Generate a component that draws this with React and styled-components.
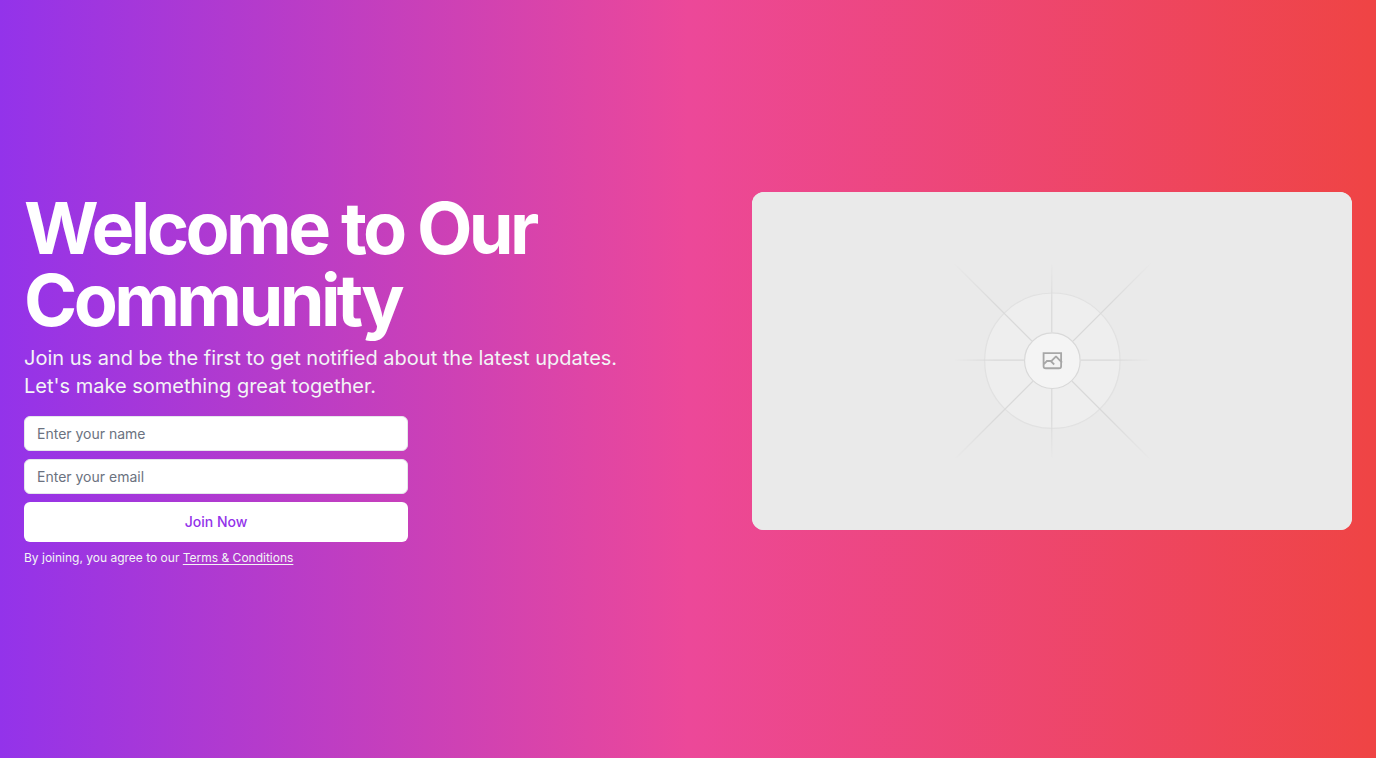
import React from "react";
import styled, { createGlobalStyle } from "styled-components";

const GlobalStyle = createGlobalStyle`
  *, *::before, *::after {
    box-sizing: border-box;
  }
  body {
    margin: 0;
    font-family: Inter, "Liberation Sans", sans-serif;
    font-size: 16px;
    line-height: 24px;
  }
`;

const Hero = styled.main`
  display: flex;
  align-items: center;
  min-height: 100vh;
  padding: 24px;
  color: #ffffff;
  background: linear-gradient(to right, #9333ea, #ec4899, #ef4444);
`;

const Columns = styled.div`
  display: grid;
  flex: 1;
  gap: 48px;
  grid-template-columns: minmax(0, 1fr) minmax(0, 600px);

  @media (max-width: 1023px) {
    grid-template-columns: minmax(0, 1fr);
  }
`;

const Content = styled.section`
  display: flex;
  flex-direction: column;
  gap: 16px;
`;

const Intro = styled.div`
  display: flex;
  flex-direction: column;
  gap: 8px;
`;

const Title = styled.h1`
  margin: 0;
  font-size: 72px;
  font-weight: 700;
  line-height: 72px;
  letter-spacing: -0.05em;
`;

const Lead = styled.p`
  margin: 0;
  max-width: 600px;
  color: #f3f4f6;
  font-size: 20px;
  line-height: 28px;
`;

const SignUp = styled.div`
  display: flex;
  flex-direction: column;
  gap: 8px;
  width: 100%;
  max-width: 384px;
`;

const Form = styled.form`
  display: flex;
  flex-direction: column;
  gap: 8px;
`;

const Field = styled.input`
  width: 100%;
  padding: 8px 12px;
  border: 1px solid #e5e7eb;
  border-radius: 6px;
  background: #ffffff;
  color: #111827;
  font-family: inherit;
  font-size: 14px;

  &::placeholder {
    color: #6b7280;
    opacity: 1;
  }
`;

const SubmitButton = styled.button`
  height: 40px;
  padding: 8px 16px;
  border: 0;
  border-radius: 6px;
  background: #ffffff;
  color: #9333ea;
  font-family: inherit;
  font-size: 14px;
  font-weight: 500;
  line-height: 20px;
  cursor: pointer;
`;

const Note = styled.p`
  margin: 0;
  color: #f3f4f6;
  font-size: 12px;
  line-height: 16px;
`;

const NoteLink = styled.a`
  color: inherit;
  text-decoration: underline;
  text-underline-offset: 2px;
`;

const Media = styled.svg`
  display: block;
  width: 100%;
  aspect-ratio: 16 / 9;
  border-radius: 12px;
  background: #eaeaea;
`;

function FadeStops() {
  return (
    <>
      <stop stopColor="#C9C9C9" stopOpacity="0" />
      <stop offset=".208" stopColor="#C9C9C9" />
      <stop offset=".792" stopColor="#C9C9C9" />
      <stop offset="1" stopColor="#C9C9C9" stopOpacity="0" />
    </>
  );
}

function Placeholder() {
  return (
    <Media
      viewBox="0 0 1200 1200"
      preserveAspectRatio="xMidYMid slice"
      fill="none"
      role="img"
      aria-label="Hero"
    >
      <defs>
        <linearGradient id="rise" x1="554.061" x2="-.48" y1=".083" y2=".087" gradientUnits="userSpaceOnUse">
          <FadeStops />
        </linearGradient>
        <linearGradient id="across" x1="796.912" x2="404.507" y1="599.963" y2="599.965" gradientUnits="userSpaceOnUse">
          <FadeStops />
        </linearGradient>
        <linearGradient id="down" x1="600.792" x2="600.794" y1="403.677" y2="796.082" gradientUnits="userSpaceOnUse">
          <FadeStops />
        </linearGradient>
        <linearGradient id="fall" x1="404.85" x2="796.972" y1="403.903" y2="796.02" gradientUnits="userSpaceOnUse">
          <FadeStops />
        </linearGradient>
      </defs>
      <rect width="1200" height="1200" fill="#EAEAEA" />
      <g opacity=".5">
        <g opacity=".5">
          <circle cx="600.709" cy="599.88" r="136.621" fill="#FAFAFA" />
          <circle cx="600.709" cy="599.88" r="135.412" stroke="#C9C9C9" strokeWidth="2.418" />
        </g>
        <path
          stroke="url(#rise)"
          strokeWidth="2.418"
          d="M0-1.209h553.581"
          transform="scale(1 -1) rotate(45 1163.11 91.165)"
        />
        <path stroke="url(#across)" strokeWidth="2.418" d="M404.846 598.671h391.726" />
        <path stroke="url(#down)" strokeWidth="2.418" d="M599.5 795.742V404.017" />
        <path stroke="url(#fall)" strokeWidth="2.418" d="m795.717 796.597-391.441-391.44" />
        <circle cx="600.709" cy="599.88" r="56.825" fill="#fff" />
        <path
          fill="#666"
          fillRule="evenodd"
          clipRule="evenodd"
          d="M616.426 586.58h-31.434v16.176l3.553-3.554.531-.531h9.068l.074-.074 8.463-8.463h2.565l7.18 7.181V586.58Zm-15.715 14.654 3.698 3.699 1.283 1.282-2.565 2.565-1.282-1.283-5.2-5.199h-6.066l-5.514 5.514-.073.073v2.876a2.418 2.418 0 0 0 2.418 2.418h26.598a2.418 2.418 0 0 0 2.418-2.418v-8.317l-8.463-8.463-7.181 7.181-.071.072Zm-19.347 5.442v4.085a6.045 6.045 0 0 0 6.046 6.045h26.598a6.044 6.044 0 0 0 6.045-6.045v-7.108l1.356-1.355-1.282-1.283-.074-.073v-17.989h-38.689v23.43l-.146.146.146.147Z"
        />
        <circle cx="600.709" cy="599.88" r="55.616" stroke="#C9C9C9" strokeWidth="2.418" />
      </g>
    </Media>
  );
}

export default function App() {
  return (
    <>
      <GlobalStyle />
      <Hero>
        <Columns>
          <Content>
            <Intro>
              <Title>Welcome to Our Community</Title>
              <Lead>
                Join us and be the first to get notified about the latest updates. Let's make something great
                together.
              </Lead>
            </Intro>
            <SignUp>
              <Form onSubmit={(event) => event.preventDefault()}>
                <Field type="text" name="name" aria-label="Enter your name" placeholder="Enter your name" />
                <Field type="email" name="email" aria-label="Enter your email" placeholder="Enter your email" />
                <SubmitButton type="submit">Join Now</SubmitButton>
              </Form>
              <Note>
                By joining, you agree to our <NoteLink href="#terms">Terms &amp; Conditions</NoteLink>
              </Note>
            </SignUp>
          </Content>
          <Placeholder />
        </Columns>
      </Hero>
    </>
  );
}
